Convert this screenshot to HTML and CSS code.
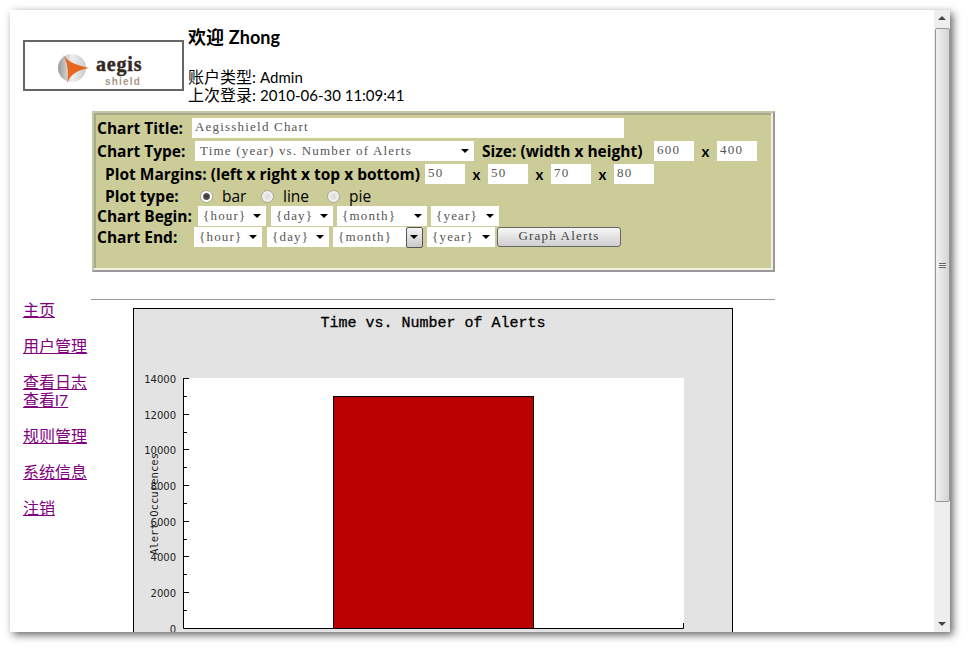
FILE: index.html
```html
<!DOCTYPE html>
<html lang="zh-CN">

<head>
    <meta charset="UTF-8">
    <title>Aegisshield Chart</title>
    <link rel="stylesheet" href="styles.css">
</head>

<body>
    <div class="window">
        <div class="page">
            <div class="top">
                <div class="logo">
                    <svg width="157" height="47" viewBox="0 0 157 47">
                        <defs>
                            <linearGradient id="ball" x1="0" y1="0" x2="1" y2="0">
                                <stop offset="0" stop-color="#999"/>
                                <stop offset="0.5" stop-color="#eee"/>
                                <stop offset="1" stop-color="#ccc"/>
                            </linearGradient>
                        </defs>
                        <circle cx="47" cy="26" r="14" fill="url(#ball)"/>
                        <path d="M37 11 C41 19 50 23 64 26 C52 28 45 33 42 41 C44 31 43 20 37 11 Z" fill="#e8671f"/>
                        <text x="71" y="29" class="logo-big">aegis</text>
                        <text x="80" y="43" class="logo-small">shield</text>
                    </svg>
                </div>
                <div class="welcome">
                    <h1>欢迎 Zhong</h1>
                    <p>账户类型: <span class="en">Admin</span><br>上次登录: <span class="en">2010-06-30 11:09:41</span></p>
                </div>
            </div>

            <form class="chart-form">
                <div class="row row-title">
                    <label class="lbl">Chart Title:</label>
                    <input class="field w-title" value="Aegisshield Chart">
                </div>
                <div class="row row-type">
                    <label class="lbl">Chart Type:</label>
                    <span class="pick w-type"><select><option>Time (year) vs. Number of Alerts</option></select></span>
                    <label class="lbl lbl-size">Size: (width x height)</label>
                    <input class="field w-num" value="600">
                    <b class="x">x</b>
                    <input class="field w-num" value="400">
                </div>
                <div class="row row-margins">
                    <label class="lbl">Plot Margins: (left x right x top x bottom)</label>
                    <input class="field w-num" value="50">
                    <b class="x">x</b>
                    <input class="field w-num" value="50">
                    <b class="x">x</b>
                    <input class="field w-num" value="70">
                    <b class="x">x</b>
                    <input class="field w-num" value="80">
                </div>
                <div class="row row-plot">
                    <label class="lbl">Plot type:</label>
                    <label class="radio r-bar"><input type="radio" name="plot" checked>bar</label>
                    <label class="radio r-line"><input type="radio" name="plot">line</label>
                    <label class="radio"><input type="radio" name="plot">pie</label>
                </div>
                <div class="row row-begin">
                    <label class="lbl">Chart Begin:</label>
                    <span class="pick w-hour"><select><option>{hour}</option></select></span>
                    <span class="pick w-day"><select><option>{day}</option></select></span>
                    <span class="pick w-month"><select><option>{month}</option></select></span>
                    <span class="pick w-year"><select><option>{year}</option></select></span>
                </div>
                <div class="row row-end">
                    <label class="lbl">Chart End:</label>
                    <span class="pick w-hour"><select><option>{hour}</option></select></span>
                    <span class="pick w-day"><select><option>{day}</option></select></span>
                    <span class="pick w-month hot"><select><option>{month}</option></select></span>
                    <span class="pick w-year"><select><option>{year}</option></select></span>
                    <button type="button" class="go">Graph Alerts</button>
                </div>
            </form>

            <div class="lower">
                <ul class="nav">
                    <li><a href="#">主页</a></li>
                    <li><a href="#">用户管理</a></li>
                    <li><a href="#">查看日志</a><br><a href="#">查看l7</a></li>
                    <li><a href="#">规则管理</a></li>
                    <li><a href="#">系统信息</a></li>
                    <li><a href="#">注销</a></li>
                </ul>
                <div class="main">
                    <hr class="rule">
                    <svg class="chart" width="600" height="400" viewBox="0 0 600 400">
                        <rect x="0.5" y="0.5" width="599" height="399" fill="#e3e3e3" stroke="#000"/>
                        <rect x="51" y="70" width="500" height="250" fill="#fff"/>
                        <rect x="200.5" y="88.5" width="200" height="232" fill="#bb0000" stroke="#000"/>
                        <path d="M50.5 70V320.5H550.5V315" fill="none" stroke="#000"/>
                        <path d="M51 70.5h5M51 106.5h5M51 141.5h5M51 177.5h5M51 213.5h5M51 248.5h5M51 284.5h5" stroke="#000"/>
                        <path d="M51 88.5h3M51 124.5h3M51 159.5h3M51 195.5h3M51 231.5h3M51 266.5h3M51 302.5h3" stroke="#000"/>
                        <text x="300" y="19" text-anchor="middle" class="chart-title">Time vs. Number of Alerts</text>
                        <g class="tick" text-anchor="end">
                            <text x="43" y="75">14000</text>
                            <text x="43" y="111">12000</text>
                            <text x="43" y="146">10000</text>
                            <text x="43" y="182">8000</text>
                            <text x="43" y="218">6000</text>
                            <text x="43" y="253">4000</text>
                            <text x="43" y="289">2000</text>
                            <text x="43" y="325">0</text>
                        </g>
                        <text transform="translate(25 196) rotate(-90)" text-anchor="middle" class="axis-label">Alert Occurences</text>
                    </svg>
                </div>
            </div>
        </div>
        <div class="scrollbar">
            <span class="arrow arrow-up"></span>
            <div class="thumb"><span class="grip"></span></div>
            <span class="arrow arrow-down"></span>
        </div>
    </div>
</body>

</html>
```

FILE: styles.css
```css
html, body {
    height: 100%;
}

body {
    background-color: #fff;
    box-sizing: border-box;
    margin: 0;
    padding: 10px 18px 19px 10px;
    overflow: hidden;
    font-family: "Lato", "Noto Sans CJK SC", sans-serif;
    color: #000;
}

.window {
    display: flex;
    height: 622px;
    background-color: #fff;
    box-shadow: 3px 3px 8px rgba(0, 0, 0, 0.6);
}

.page {
    flex: 1;
    min-width: 0;
    overflow: hidden;
    padding-left: 13px;
}

/* header */
.top {
    display: flex;
    height: 101px;
}

.logo {
    width: 157px;
    height: 47px;
    margin-top: 30px;
    border: 2px solid #666;
}

.logo svg {
    display: block;
}

.logo-big {
    font-family: "Liberation Serif", serif;
    font-weight: bold;
    font-size: 20px;
    letter-spacing: 0.8px;
    fill: #33281f;
    stroke: #33281f;
    stroke-width: 0.4px;
}

.logo-small {
    font-family: "Liberation Sans", sans-serif;
    font-weight: bold;
    font-size: 10px;
    letter-spacing: 1.2px;
    fill: #a89888;
}

.welcome {
    margin-left: 4px;
}

.welcome h1 {
    font-size: 18px;
    font-weight: bold;
    letter-spacing: 0.1px;
    line-height: 24px;
    margin: 15px 0 0;
}

.welcome p {
    font-size: 16px;
    line-height: 18px;
    margin: 19px 0 0;
}

.en {
    font-size: 15px;
}

/* chart options */
.chart-form {
    box-sizing: border-box;
    width: 683px;
    height: 161px;
    margin-left: 69px;
    padding: 5px 0 0 3px;
    background-color: #cccc99;
    border: 2px solid;
    border-color: #c4c4a6 #999 #999 #c4c4a6;
    box-shadow: inset -2px -2px 0 #f0f0e0, inset 2px 2px 0 #a8a88a;
}

.row {
    display: flex;
    align-items: center;
    height: 20px;
    margin-bottom: 3px;
}

.row-plot {
    height: 18px;
    margin-bottom: 1px;
}

.row-begin {
    margin-bottom: 1px;
}

.lbl,
.radio {
    font-family: "Open Sans", "Noto Sans CJK SC", sans-serif;
    font-size: 15.5px;
    white-space: nowrap;
}

.lbl {
    font-weight: 700;
}

.row-title .lbl {
    width: 95px;
}

.row-type .lbl {
    width: 98px;
}

.row-type .lbl-size {
    width: 172px;
    margin-left: 4px;
}

.row-margins .lbl {
    width: 320px;
    margin-left: 8px;
}

.row-plot .lbl {
    width: 95px;
    margin-left: 8px;
}

.row-begin .lbl {
    width: 101px;
}

.row-end .lbl {
    width: 97px;
}

.field,
.pick select,
.go {
    font-family: "Liberation Serif", serif;
    font-size: 13px;
    letter-spacing: 1.2px;
}

.field {
    box-sizing: border-box;
    height: 20px;
    padding: 0 3px 3px;
    border: 0;
    color: #555;
    background-color: #fff;
}

.w-title {
    width: 432px;
}

.w-num {
    width: 40px;
}

.x {
    width: 23px;
    text-align: center;
    font-size: 15px;
}

.pick {
    position: relative;
    display: block;
    height: 20px;
    margin-right: 4px;
    background-color: #fff;
}

.pick select {
    appearance: none;
    display: block;
    width: 100%;
    height: 20px;
    padding: 0 0 2px 5px;
    border: 0;
    color: #555;
    background: transparent;
}

.pick::after {
    content: "";
    position: absolute;
    right: 5px;
    top: 8px;
    border: 4px solid transparent;
    border-top: 4px solid #000;
    border-bottom: 0;
}

.pick.hot::before {
    content: "";
    position: absolute;
    right: 0;
    top: 0;
    box-sizing: border-box;
    width: 17px;
    height: 21px;
    border: 1px solid #555;
    border-radius: 2px;
    background: linear-gradient(#f4f4f4, #c9c9c9);
}

.w-type {
    width: 279px;
}

.w-hour {
    width: 68px;
    margin-right: 5px;
}

.w-day {
    width: 62px;
}

.w-month {
    width: 90px;
}

.w-year {
    width: 68px;
    margin-right: 2px;
}

.radio {
    display: flex;
    align-items: center;
}

.radio input {
    appearance: none;
    box-sizing: border-box;
    width: 13px;
    height: 13px;
    margin: 0 9px 0 0;
    border: 1px solid #a9a98c;
    border-radius: 50%;
    background: radial-gradient(circle, #d8d8d8, #fff);
}

.radio input:checked {
    background: radial-gradient(circle, #333 0, #555 3px, #fff 4px);
}

.r-bar {
    width: 61px;
}

.r-line {
    width: 66px;
}

.go {
    box-sizing: border-box;
    width: 124px;
    height: 20px;
    padding: 0 0 2px;
    color: #444;
    border: 1px solid #666;
    border-radius: 3px;
    background: linear-gradient(#f6f6f6, #cfcfcf);
}

/* nav and chart */
.lower {
    display: flex;
}

.nav {
    width: 68px;
    margin: 29px 0 0;
    padding: 0;
    list-style: none;
    font-size: 16px;
    line-height: 18px;
}

.nav li {
    margin-bottom: 18px;
}

.nav a {
    color: #800080;
}

.main {
    width: 684px;
}

.rule {
    height: 1px;
    margin: 27px 0 8px;
    border: 0;
    background-color: #999;
}

.chart {
    display: block;
    margin-left: 42px;
}

.chart-title {
    font-family: "Liberation Mono", monospace;
    font-size: 15px;
    stroke: #000;
    stroke-width: 0.3px;
}

.tick {
    font-family: "DejaVu Sans", sans-serif;
    font-size: 10px;
    fill: #222;
}

.axis-label {
    font-family: "DejaVu Sans Mono", monospace;
    font-size: 10.6px;
    fill: #222;
}

/* scrollbar */
.scrollbar {
    display: flex;
    flex-direction: column;
    align-items: center;
    width: 16px;
    background-color: #eee;
}

.arrow {
    flex: none;
    width: 0;
    margin: 6px 0;
    border: 4px solid transparent;
}

.arrow-up {
    border-top: 0;
    border-bottom: 4px solid #444;
}

.arrow-down {
    margin-top: auto;
    border-bottom: 0;
    border-top: 4px solid #444;
}

.thumb {
    box-sizing: border-box;
    display: flex;
    align-items: center;
    justify-content: center;
    width: 15px;
    height: 474px;
    margin-top: 2px;
    border: 1px solid #979797;
    border-radius: 2px;
    background: linear-gradient(to right, #f2f2f2, #d4d4d4);
}

.grip {
    width: 7px;
    height: 5px;
    background: repeating-linear-gradient(#666 0 1px, #eee 1px 2px);
}
```
